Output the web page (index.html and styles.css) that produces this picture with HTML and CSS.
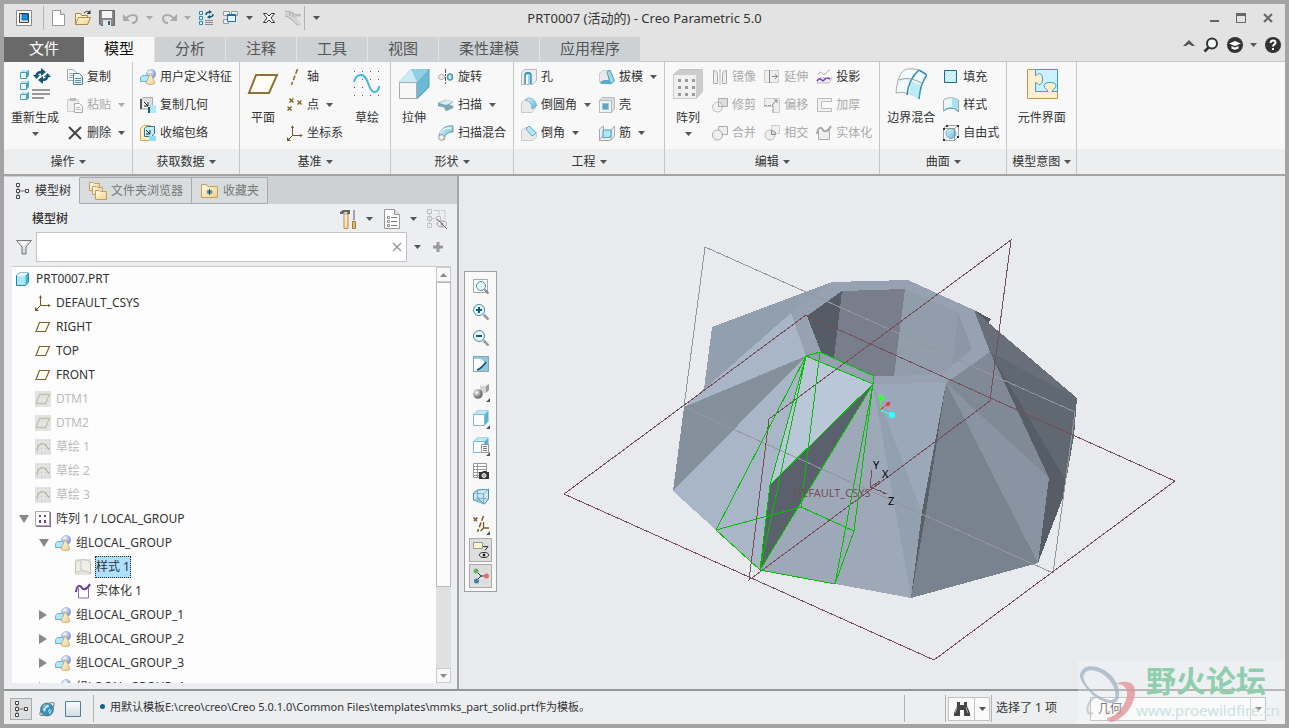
FILE: index.html
```html
<!DOCTYPE html>
<html lang="zh-CN">
<head>
<meta charset="UTF-8">
<meta name="viewport" content="width=device-width, initial-scale=1.0">
<title>PRT0007 (活动的) - Creo Parametric 5.0</title>
<link rel="stylesheet" href="styles.css">
</head>
<body>
    <!-- icon sprite -->
    <svg class="sprite" aria-hidden="true">
        <defs>
            <linearGradient id="g-blue" x1="0" y1="0" x2="1" y2="1"><stop offset="0" stop-color="#e4f8fd"/><stop offset="1" stop-color="#5fb4d4"/></linearGradient>
            <linearGradient id="g-gold" x1="0" y1="0" x2="1" y2="1"><stop offset="0" stop-color="#fffbe8"/><stop offset="1" stop-color="#f3cf86"/></linearGradient>
            <linearGradient id="g-grey" x1="0" y1="0" x2="1" y2="1"><stop offset="0" stop-color="#fdfdfd"/><stop offset="1" stop-color="#c4c4c4"/></linearGradient>
            <linearGradient id="g-pane" x1="0" y1="0" x2="0" y2="1"><stop offset="0" stop-color="#fdfefe"/><stop offset="1" stop-color="#cfdde3"/></linearGradient>
            <radialGradient id="g-ball" cx=".4" cy=".35"><stop offset="0" stop-color="#fff"/><stop offset="1" stop-color="#8da0dc"/></radialGradient>
            <radialGradient id="g-dark" cx=".35" cy=".35"><stop offset="0" stop-color="#fff"/><stop offset="1" stop-color="#777"/></radialGradient>
        </defs>
        <symbol id="caret" viewBox="0 0 7 4"><path d="M0 0h7L3.500 4z" fill="currentColor"/></symbol>
        <symbol id="app" viewBox="0 0 16 16"><path d="M.5.5h15v15H.5z" fill="#fff" stroke="#888"/><path d="M3.500 3.500h9v9h-9z" fill="#ddd" stroke="#444"/><path d="M6 4h6v6H6z" fill="#0b98dc" stroke="#226" stroke-width=".5"/></symbol>
        <symbol id="new" viewBox="0 0 16 16"><path d="M1.500.5h8l4 4v11h-12z" fill="#fff" stroke="#999"/><path d="M9.500.5v4h4" fill="#d9edf6" stroke="#999"/></symbol>
        <symbol id="open" viewBox="0 0 16 16"><path d="M.5 14.500v-11h5l1 2h6v3" fill="#fff1cc" stroke="#b0893c"/><path d="M.5 14.500l3-7h12l-3 7z" fill="url(#g-gold)" stroke="#b0893c"/><path d="M9 3c2-2 3-2 5-1" fill="none" stroke="#333"/><path d="M15.500 0v4h-4z" fill="#333"/></symbol>
        <symbol id="save" viewBox="0 0 16 16"><path d="M.5.500h15v15H2l-1.500-1.500z" fill="#878787" stroke="#666"/><path d="M3 1h10v7H3z" fill="#f4f4f4"/><path d="M4 10h8v6H4z" fill="#d5eaf3"/><path d="M9 11h2v4H9z" fill="#555"/></symbol>
        <symbol id="undo" viewBox="0 0 16 16"><path d="M3 9c3-5 11-5 11-1 0 3-2 5-5 5" fill="none" stroke="#aaa" stroke-width="2"/><path d="M0 4v7h7z" fill="#aaa"/></symbol>
        <symbol id="redo" viewBox="0 0 16 16"><path d="M13 9C10 4 2 4 2 8c0 3 2 5 5 5" fill="none" stroke="#aaa" stroke-width="2"/><path d="M16 4v7H9z" fill="#aaa"/></symbol>
        <symbol id="regen" viewBox="0 0 16 16"><path d="M.5 1.500h3v3h-3zM.5 6.500h3v3h-3zM.5 11.500h3v3h-3z" fill="#dff6fc" stroke="#2f87a8"/><path d="M6 10.500h8M6 12.500h8M6 14.500h8" stroke="#888"/><path d="M7 5c0-2 1-3 4-3M14 4c0 2-1 3-4 3" fill="none" stroke="#14577a" stroke-width="1.500"/><path d="M10 0l3 2-3 2zM11 5L8 7l3 2z" fill="#14577a"/></symbol>
        <symbol id="wins" viewBox="0 0 16 16"><path d="M.5 1.500h6v4h-6zM8.500 1.500h6v4h-6zM.5 9.500h5v4h-5z" fill="#eee" stroke="#999"/><path d="M4.500 4.500h8v7h-8z" fill="#e4f6fb" stroke="#1d7190"/><path d="M4 4h9v2H4z" fill="#1d7190"/></symbol>
        <symbol id="closewin" viewBox="0 0 16 16"><path d="M2.500 3.500h3L8 6l2.500-2.500h3L10 8l3.500 4.500h-3L8 10l-2.500 2.500h-3L6 8z" fill="#fff" stroke="#333"/></symbol>
        <symbol id="curve-a" viewBox="0 0 16 16"><path d="M0 1h7c3 5 5 8 9 13v2h-3C8 13 7 8 0 6z" fill="#d4d4d4"/><path d="M0 1c8 1 10 5 16 4M0 6c6 1 8 6 13 9" fill="none" stroke="#aaa"/><path d="M5 2v4M8 3v4M11 4v4M14 4v3" stroke="#aaa"/></symbol>
        <symbol id="min" viewBox="0 0 12 12"><path d="M2 8h9v2H2z" fill="#666"/></symbol>
        <symbol id="max" viewBox="0 0 12 12"><path d="M1.500 2.500h9v8h-9z" fill="none" stroke="#666"/><path d="M1 1h10v3H1z" fill="#666"/></symbol>
        <symbol id="close" viewBox="0 0 12 12"><path d="M2 2l8 8M10 2l-8 8" stroke="#666" stroke-width="2"/></symbol>
        <symbol id="up" viewBox="0 0 12 16"><path d="M0 9l6-6 6 6H9L6 7 3 9z" fill="#555"/></symbol>
        <symbol id="search" viewBox="0 0 16 16"><circle cx="9" cy="6.500" r="5" fill="#f4fafc" stroke="#333" stroke-width="2"/><path d="M1.500 14.500l4-4" stroke="#333" stroke-width="2.500"/></symbol>
        <symbol id="learn" viewBox="0 0 16 16"><circle cx="8" cy="8" r="8" fill="#333"/><path d="M2 6.500L8 4l6 2.500L8 9z" fill="#fff"/><path d="M4.500 9v2.500c2 1.500 5 1.500 7 0V9L8 10.500z" fill="#fff"/></symbol>
        <symbol id="help" viewBox="0 0 16 16"><circle cx="8" cy="8" r="8" fill="#333"/><path d="M5.500 6c0-3.500 5-3.300 5-.5 0 2-2.500 2-2.500 4" fill="none" stroke="#fff" stroke-width="2"/><path d="M7 11h2v2H7z" fill="#fff"/></symbol>

        <symbol id="regen-l" viewBox="0 0 32 32"><path d="M2 4l2-2h6v6l-2 2H2zM2 15l2-2h6v6l-2 2H2zM2 26l2-2h6v6l-2 2H2z" fill="#45a5c6"/><path d="M3 3l1.500-1h5L8 4H2zM3 14l1.500-1h5L8 15H2zM3 25l1.500-1h5L8 26H2z" fill="#b6e9f6"/><path d="M1.500 4.500h6v6h-6zM1.500 15.500h6v6h-6zM1.500 26.500h6v5h-6z" fill="#e9fafe" stroke="#4c9ab6"/><path d="M13 22h18M13 26h18M13 30h12" stroke="#999" stroke-width="2"/><path d="M17.500 8c0-3 2-4 6-4M28.500 8c0 3-2 4-6 4" fill="none" stroke="#14577a" stroke-width="2.500"/><path d="M22 0l5 4-5 4zM24 8l-5 4 5 4zM14 7h7l-3.500 4zM25 9h7l-3.500-4z" fill="#14577a"/></symbol>
        <symbol id="copy" viewBox="0 0 16 16"><path d="M.5.500h6l3 3v8h-9z" fill="#f8f8f8" stroke="#aaa"/><path d="M2 4.500h4M2 6.500h5M2 8.500h5" stroke="#aaa"/><path d="M6.500 4.500h6l3 3v8h-9z" fill="#e5f6fb" stroke="#4a7f93"/><path d="M8 9.500h6M8 11.500h6M8 13.500h6" stroke="#5e8fa3"/></symbol>
        <symbol id="paste" viewBox="0 0 16 16"><path d="M.5 2.500h11v12H.5z" fill="#eee" stroke="#ccc"/><path d="M3 1h6v3H3z" fill="#bbb"/><path d="M7.500 6.500h5l3 3v6h-8z" fill="#f8f8f8" stroke="#aaa"/><path d="M9 10.500h4M9 12.500h5" stroke="#bbb"/></symbol>
        <symbol id="delete" viewBox="0 0 16 16"><path d="M2 2l12 12M14 2L2 14" stroke="#444" stroke-width="2"/></symbol>
        <symbol id="udf" viewBox="0 0 16 16"><circle cx="11" cy="5" r="5" fill="url(#g-ball)"/><path d="M.5 8.500l2-2h6v6h-8z" fill="#aee8fa" stroke="#6db4cc"/><path d="M10.500 4L6 14c2 2 7 2 9 0z" fill="url(#g-gold)" stroke="#b59a5e" stroke-width=".7"/></symbol>
        <symbol id="copygeom" viewBox="0 0 16 16"><path d="M.5 3l3-2.500h9V9L10 12H.5z" fill="#ddd" stroke="#aaa"/><path d="M2 4h7v7H2z" fill="#eee"/><path d="M1 2v10" stroke="#555" stroke-width="2"/><path d="M4 5l4 4M8 5v4H4" stroke="#222" fill="none"/><path d="M10 8h6v8h-6z" fill="#ade9fa"/><path d="M9 10v6" stroke="#1a5a76" stroke-width="2"/></symbol>
        <symbol id="shrink" viewBox="0 0 16 16"><path d="M.5 3.500l3-3h7v15H.5z" fill="#ffedc5" stroke="#d3ac60"/><path d="M4.500 3.500l2-2h8v7l-3 3h-7z" fill="#c0eefa" stroke="#2c7891"/><path d="M6 5l4 4M10 5v4H6" stroke="#222" fill="none"/><path d="M9 11h7v5H9z" fill="#94dcf3"/></symbol>
        <symbol id="plane-l" viewBox="0 0 32 32"><path d="M9 7h21l-8 18H2z" fill="#fffdf5" stroke="#927037" stroke-width="2"/></symbol>
        <symbol id="axis" viewBox="0 0 16 16"><path d="M10.500 0l-6 16" stroke="#8a6622" stroke-width="1.500" stroke-dasharray="5 2"/></symbol>
        <symbol id="points" viewBox="0 0 16 16"><path d="M2.500 1.500l4 4M6.500 1.500l-4 4M10.500 3.500l4 4M14.500 3.500l-4 4M.5 9.500l4 4M4.500 9.500l-4 4" stroke="#8a6622" stroke-width="1.500"/></symbol>
        <symbol id="csys" viewBox="0 0 16 16"><path d="M5.500 1v9.500H15M5.500 10.500L1 15" fill="none" stroke="#76591f"/><path d="M4 3L5.500 0 7 3zM13 9l3 1.500-3 1.500zM0 12v4h4z" fill="#76591f"/></symbol>
        <symbol id="sketch-l" viewBox="0 0 32 32"><path d="M3.500 3v26M11.500 3v26M19.500 3v26M27.500 3v26" stroke="#555" stroke-dasharray="1 7"/><path d="M3 14c1-4 3-7 7-7 8 0 7 17 13 17 3 0 5-2 5-6" fill="none" stroke="#46b6e2" stroke-width="2"/></symbol>
        <symbol id="extrude-l" viewBox="0 0 32 32"><path d="M1 14L13 1h18v18L19 31z" fill="#6cb9d5"/><path d="M1 14L13 1h18L19 14z" fill="#8fcfe4"/><path d="M1 14L13 1l6 13z" fill="#c9ecf5"/><path d="M31 1v18L19 31" fill="none" stroke="#5a9fb8"/><path d="M1.500 14.500h17v16h-17z" fill="#f6f6f6" stroke="#aaa"/></symbol>
        <symbol id="revolve" viewBox="0 0 16 16"><ellipse cx="3.500" cy="8" rx="3" ry="2.500" fill="#eee" stroke="#aaa"/><ellipse cx="12" cy="8" rx="2.500" ry="3" fill="#bfeaf7" stroke="#4a9ab7" stroke-width="1.500"/><path d="M7.500 0v16" stroke="#555" stroke-dasharray="4 1 2 1"/></symbol>
        <symbol id="sweep" viewBox="0 0 16 16"><path d="M0 6l8-3 7 2-4 3 4 1v2l-7 3-2-4-6-1z" fill="#78a9bb" stroke="#8aa0a9" stroke-width=".5"/><path d="M1 6l8-3 6 2-7 3z" fill="#dcebf0"/></symbol>
        <symbol id="blend" viewBox="0 0 16 16"><path d="M1 11C2 4 8 0 15 1v6c-6 0-8 3-9 8z" fill="url(#g-blue)" stroke="#3f819a" stroke-width=".7"/><path d="M2 8c2-4 5-5 12-5" fill="none" stroke="#fff"/><circle cx="3.500" cy="12.500" r="2.800" fill="#f5f5f5" stroke="#999"/></symbol>
        <symbol id="hole" viewBox="0 0 16 16"><path d="M.5 3.500l3-3h12v11l-4 4H.5z" fill="#ececec" stroke="#bbb"/><path d="M4 15V6c0-3 6-3 6 0v9" fill="#9bd6e8" stroke="#2b86a5" stroke-width="1.300"/><path d="M5 15V6h2v9z" fill="#fff"/></symbol>
        <symbol id="round" viewBox="0 0 16 16"><path d="M.5 5.500l4-3c6 1 9 5 10 9l-3.500 4H.5z" fill="#eaeaea" stroke="#ccc"/><path d="M4 3L7 1c5 0 8 3 8.500 8L11 12C11 7 9 4 4 3z" fill="url(#g-blue)" stroke="#4c9fbd" stroke-width=".7"/></symbol>
        <symbol id="chamfer" viewBox="0 0 16 16"><path d="M.5 5.500l4-3h3l8 7v3l-4 3H.5z" fill="#eaeaea" stroke="#ccc"/><path d="M5 4l3-3 7.500 7L11 11z" fill="#b5e9f7" stroke="#3c9abb" stroke-width=".8"/></symbol>
        <symbol id="draft" viewBox="0 0 16 16"><path d="M.5 4.500l4-3h5v12H.5z" fill="#e9e9e9" stroke="#ccc"/><path d="M8 3l3-2 4.500 11-4 3z" fill="#9fdaea" stroke="#3188a9" stroke-width=".8"/><path d="M1 13l4-2h6l1 4H2z" fill="#58aeca"/></symbol>
        <symbol id="shell" viewBox="0 0 16 16"><path d="M.5 3.500l3-3h12v11l-3 4H.5z" fill="#ddd" stroke="#bbb"/><path d="M.5 3.500h12v12H.5z" fill="#f2f2f2" stroke="#bbb"/><path d="M3.500 6.500h6v6h-6z" fill="#5aa9c6" stroke="#8fc6da"/></symbol>
        <symbol id="rib" viewBox="0 0 16 16"><path d="M.5 4l4-3v9l-4 5zM12 5l3.500-4v10L12 15z" fill="#eee" stroke="#aaa"/><path d="M4 5h8v7l-8 1z" fill="#ade8f8" stroke="#4d9db8"/><path d="M.5 15.500h12" stroke="#555" stroke-dasharray="1 1"/></symbol>
        <symbol id="pattern-l" viewBox="0 0 32 32"><path d="M1.500 6.500l6-5h23v22l-6 7h-23z" fill="#ccc" stroke="#c5c5c5"/><path d="M1.500 6.500h23v24h-23z" fill="#f0f0f0" stroke="#ccc"/><path d="M6 11h3v3H6zM13 11h3v3h-3zM20 11h3v3h-3zM6 18h3v3H6zM13 18h3v3h-3zM20 18h3v3h-3zM6 25h3v3H6zM13 25h3v3h-3zM20 25h3v3h-3z" fill="#999"/></symbol>
        <symbol id="mirror" viewBox="0 0 16 16"><path d="M1.500 1.500c3 0 4 2 4 5v8h-4zM14.500 1.500c-3 0-4 2-4 5v8h4z" fill="#eee" stroke="#aaa"/><path d="M8 0v16" stroke="#bbb"/></symbol>
        <symbol id="trim" viewBox="0 0 16 16"><path d="M6.500 1.500h9v8h-9z" fill="#ddd" stroke="#aaa"/><circle cx="5.500" cy="10" r="5" fill="#eee" fill-opacity=".8" stroke="#bbb"/><path d="M6.500 5v4.500h4" fill="none" stroke="#aaa"/></symbol>
        <symbol id="merge" viewBox="0 0 16 16"><path d="M6.500 1.500h9v8h-9z" fill="#eee" stroke="#aaa"/><circle cx="5.500" cy="10" r="5" fill="#eee" stroke="#aaa"/></symbol>
        <symbol id="extend" viewBox="0 0 16 16"><path d="M.5 1.500h14v12H.5z" fill="#eee" stroke="#ccc"/><path d="M5.500 1v13M8 7.500h5M11 5l2.500 2.500L11 10" fill="none" stroke="#888"/></symbol>
        <symbol id="offset" viewBox="0 0 16 16"><path d="M.5 1.500h15v14H9v-6H.5z" fill="#eee" stroke="#ccc"/><path d="M0 8.500h9V16" fill="none" stroke="#999" stroke-dasharray="3 1"/><path d="M8 8l5-5M10 3h3v3" fill="none" stroke="#888"/></symbol>
        <symbol id="isect" viewBox="0 0 16 16"><path d="M7.500.5h8v8h-8z" fill="#f0f0f0" stroke="#ccc"/><circle cx="6" cy="10" r="5" fill="#eee" stroke="#bbb"/><path d="M7.500 5.500c3 0 4 2 4 4h-4z" fill="#ddd" stroke="#888"/></symbol>
        <symbol id="project" viewBox="0 0 16 16"><path d="M2 5c4-5 4 2 7 0s3-4 5-4" fill="none" stroke="#aaa"/><path d="M1 14l3-5h12l-3 5z" fill="#f3f3f3" stroke="#bbb"/><path d="M1 12c3-6 5 2 7-1s4-2 6-1" fill="none" stroke="#7a3fb8" stroke-width="1.500"/></symbol>
        <symbol id="thicken" viewBox="0 0 16 16"><path d="M15.500 1.500H1.500v13h14v-3h-10v-7h10z" fill="#f2f2f2" stroke="#bbb"/></symbol>
        <symbol id="solidify" viewBox="0 0 16 16"><path d="M2.500 6v8.500h11V5" fill="#eee" stroke="#aaa"/><path d="M1 9C2 0 6 3 7 5s5 2 8-4" fill="none" stroke="#aaa" stroke-width="2"/></symbol>
        <symbol id="boundary-l" viewBox="0 0 32 32"><path d="M1 25C2 12 5 3 12 1c8-1 14 1 20 6-4 5-7 13-8 24-6-5-14-8-23-6z" fill="#f1fafd" stroke="#aaa"/><path d="M16 13l11 5-3 13-10-5z" fill="#bdeaf7"/><path d="M24 2l8 5c-4 5-7 13-8 24" fill="none" stroke="#3c94b4" stroke-width="1.500"/><path d="M12 27c1-11 5-19 12-25" fill="none" stroke="#2e88aa" stroke-width="1.500"/><path d="M4 12c8-3 16-1 24 4" fill="none" stroke="#999"/></symbol>
        <symbol id="fill" viewBox="0 0 16 16"><path d="M1.500 1.500h12v12h-12z" fill="#bdeefa" stroke="#216b88"/><path d="M3 8l5-5M3 12l9-9M7 12l5-5" stroke="#fff"/></symbol>
        <symbol id="style" viewBox="0 0 16 16"><path d="M.5 3C5 0 11 0 15.500 3v12C12 10 5 10 .5 14z" fill="#e5f6fb" stroke="#aaa"/><path d="M9 1c3 0 5 1 6 2v11c-2-3-4-4-6-4z" fill="#a5e1f4"/><path d="M.5 14C5 10 12 10 15.500 15" fill="none" stroke="#3b9cbd"/></symbol>
        <symbol id="freestyle" viewBox="0 0 16 16"><circle cx="8" cy="8.500" r="5" fill="url(#g-blue)" stroke="#6db4cd"/><path d="M.5 3.500l3-3h12v11l-4 4H.5zM.5 3.500h11v12M11.500 3.500l4-3" fill="none" stroke="#888" stroke-width=".8"/><path d="M0 3h2v2H0zM3 0h2v2H3zM14 0h2v2h-2zM0 14h2v2H0zM14 11h2v2h-2z" fill="#333"/></symbol>
        <symbol id="intent-l" viewBox="0 0 32 32"><path d="M1.500 1.500h30v29h-30z" fill="#ffefcf" stroke="#bd9550"/><path d="M9.500 1.500h22v22H26c0-2 4-3 4-6 0-4-12-4-12 0 0 3 4 4 4 6H9.500v-9c2 0 2 2 4 2 4 0 4-11 0-11-2 0-2 2-4 2z" fill="#c9f1ff" stroke="#3f9dbf"/></symbol>

        <symbol id="tree" viewBox="0 0 16 16"><path d="M2.500.500h3v3h-3zM2.500 6.500h3v3h-3zM2.500 12.500h3v3h-3zM11.500 6.500h3v3h-3z" fill="#fff" stroke="#444"/><path d="M4 4v2M4 10v2M6 8h5" stroke="#777"/></symbol>
        <symbol id="folders" viewBox="0 0 20 20"><g fill="url(#g-gold)" stroke="#c0a062"><path d="M1.500 9.500v-8h4l1 1h5v7z"/><path d="M4.500 13.500v-8h4l1 1h5v7z"/><path d="M7.500 18.500v-9h4l1 1h6v8z"/></g></symbol>
        <symbol id="fav" viewBox="0 0 20 20"><path d="M1.500 16.500v-13h5l1 2h10v11z" fill="url(#g-gold)" stroke="#c0a062"/><path d="M9.500 8v6M6.500 11h6M7.500 9l4 4M11.500 9l-4 4" stroke="#125e7c"/></symbol>
        <symbol id="tools" viewBox="0 0 20 20"><path d="M1 3l3-2h7v4H8V3H6L4 5H1z" fill="#666"/><path d="M5 5h4v14.500H5z" fill="url(#g-gold)" stroke="#b58f4e"/><path d="M15 1v10" stroke="#888" stroke-width="1.500"/><path d="M13.500 12.500h3v7h-3z" fill="#e7b766" stroke="#a97b35"/></symbol>
        <symbol id="list" viewBox="0 0 20 20"><path d="M1.500.5h10l5 5v14h-15z" fill="#fff" stroke="#999"/><path d="M11.500.5v5h5" fill="#d7e7ee" stroke="#999"/><path d="M8 8.500h6M8 12.500h6M8 16.500h6" stroke="#777"/><path d="M4.500 7.500h2v2h-2zM4.500 11.500h2v2h-2zM4.500 15.500h2v2h-2z" fill="#fff" stroke="#777" stroke-width=".8"/></symbol>
        <symbol id="treehide" viewBox="0 0 20 20"><path d="M.5.5h4v4h-4zM.5 7.500h4v4h-4zM.5 14.500h4v4h-4zM9.500 7.500h4v4h-4z" fill="none" stroke="#c0c0c0"/><path d="M2.500 5v9M5 9.500h4M7 1.500h5v5M14 1.500h4v9" fill="none" stroke="#c8c8c8"/><ellipse cx="15" cy="15" rx="5" ry="3" fill="#eee" stroke="#999"/><circle cx="15" cy="15" r="1.500" fill="#999"/><path d="M10 10l10 10" stroke="#777"/></symbol>
        <symbol id="funnel" viewBox="0 0 16 16"><path d="M.5 1.500h15L10 8v7H6V8z" fill="url(#g-grey)" stroke="#777"/><path d="M4 3h7L8 7z" fill="#fff"/></symbol>
        <symbol id="plus" viewBox="0 0 12 12"><path d="M6 1v10M1 6h10" stroke="#999" stroke-width="3"/></symbol>
        <symbol id="x" viewBox="0 0 10 10"><path d="M1 1l8 8M9 1L1 9" stroke="#999" stroke-width="1.500"/></symbol>
        <symbol id="part" viewBox="0 0 16 16"><path d="M1.500 4.500l3-2.500h9v9l-3 3.500h-9z" fill="#4cb3dc" stroke="#2683a7"/><path d="M2 4l3-2h8l-3 3H2z" fill="#e6fafe"/><path d="M2 5h8.500v9H2z" fill="#a8e8fa"/></symbol>
        <symbol id="plane" viewBox="0 0 16 16"><path d="M4.500 3.500h10l-4 9H1z" fill="#fffdf5" stroke="#82632b" stroke-width="1.200"/></symbol>
        <symbol id="plane-off" viewBox="0 0 16 16"><path d="M0 0h16v16H0z" fill="#e3e3e3"/><path d="M4.500 3.500h10l-4 9H1z" fill="none" stroke="#c4c1ad" stroke-width="1.300"/></symbol>
        <symbol id="sketch-off" viewBox="0 0 16 16"><path d="M0 0h16v16H0z" fill="#e3e3e3"/><path d="M2.500 1v15M6.500 1v15M10.500 1v15M14.500 1v15" stroke="#c4c4c4" stroke-dasharray="1 3"/><path d="M2 12C3 3 10 2 14 11" fill="none" stroke="#bcb99e" stroke-width="1.500"/></symbol>
        <symbol id="pattern" viewBox="0 0 16 16"><path d="M1 1h15v15H1z" fill="#866aa5"/><path d="M.5.500h14v14H.5z" fill="#fff" stroke="#aaa"/><path d="M4 4h2v2H4zM9 4h2v2H9zM4 9h2v3H4zM9 9h2v3H9z" fill="#6a3f92"/></symbol>
        <symbol id="style-off" viewBox="0 0 16 16"><path d="M0 0h16v16H0z" fill="#e4e4e4"/><path d="M.5 3C4 0 12 0 15.500 3v12C12 11 5 11 .5 14zM6 1v10" fill="#eeeee8" stroke="#c4c3b4"/></symbol>
        <symbol id="solid" viewBox="0 0 16 16"><path d="M3.500 5v10h10V5" fill="#fff" stroke="#8b6ca8"/><path d="M1 9C2 0 6 3 7 5s5 2 8-4" fill="none" stroke="#6c3b9a" stroke-width="2"/></symbol>

        <symbol id="refit" viewBox="0 0 16 16"><path d="M.5 1.500h14v13H.5z" fill="#fff" stroke="#aaa"/><circle cx="8" cy="8" r="4.500" fill="#e6f9fd" stroke="#4b8ca6"/><path d="M11.500 11.500l4 4" stroke="#888" stroke-width="2"/></symbol>
        <symbol id="zoomin" viewBox="0 0 16 16"><circle cx="6" cy="6" r="5.500" fill="#e8fafe" stroke="#4b8ca6"/><path d="M6 3v6M3 6h6" stroke="#0e5c80" stroke-width="2"/><path d="M10.500 10.500l5 5" stroke="#999" stroke-width="2.500"/></symbol>
        <symbol id="zoomout" viewBox="0 0 16 16"><circle cx="6" cy="6" r="5.500" fill="#e8fafe" stroke="#4b8ca6"/><path d="M3 6h6" stroke="#0e5c80" stroke-width="2"/><path d="M10.500 10.500l5 5" stroke="#999" stroke-width="2.500"/></symbol>
        <symbol id="repaint" viewBox="0 0 16 16"><path d="M.5.500h15v15H.5z" fill="#8cc9df" stroke="#8aa2ab"/><path d="M1 3c4-1 10 0 11 4l-8 8H1z" fill="#fff"/><path d="M13 6c-2 3-4 6-9 8" fill="none" stroke="#174e68" stroke-width="1.500"/></symbol>
        <symbol id="shade" viewBox="0 0 16 16"><path d="M7 3l2-2h7v6l-3 3H7z" fill="#999"/><path d="M7 3l2-2h7l-3 2z" fill="#f2f2f2"/><path d="M7 3h6v7H7z" fill="#d5d5d5"/><circle cx="5" cy="11" r="4.800" fill="url(#g-dark)"/></symbol>
        <symbol id="orient" viewBox="0 0 16 16"><path d="M.5 4.500l4-4h11v11l-4 4H.5z" fill="#57b3d3"/><path d="M1 4l4-3h10l-3 3z" fill="#bfe9f4"/><path d="M.5 4.500h11v11H.5z" fill="#fff" stroke="#7dbcd2"/></symbol>
        <symbol id="views" viewBox="0 0 16 16"><path d="M.5 4.500l4-4h11v11l-4 4H.5z" fill="#57b3d3"/><path d="M1 4l4-3h10l-3 3z" fill="#bfe9f4"/><path d="M.5 4.500h11v11H.5z" fill="#fff" stroke="#7dbcd2"/><path d="M8.500 7.500h7v8h-7z" fill="#fff" stroke="#999"/><path d="M10 9.500h4M10 11.500h4M10 13.500h4" stroke="#777"/></symbol>
        <symbol id="viewmgr" viewBox="0 0 16 16"><path d="M.5.5h13v14H.5zM.5 3.500h13M.5 6.500h13M.5 9.500h13M.5 12.500h13M4.500.5v14" fill="#fff" stroke="#999"/><path d="M6 9h3l1-1h3l1 1h2v7H6z" fill="#333"/><circle cx="11" cy="12.500" r="2" fill="#aaa" stroke="#eee"/></symbol>
        <symbol id="persp" viewBox="0 0 16 16"><path d="M.5 4l4-3 11-1v10l-4 5-11-4z" fill="#cfe8f0" stroke="#4190ae"/><path d="M1 11l4-3 6 7z" fill="#8cc3d7"/><path d="M.5 4l10 1 5-5M10.500 5v10M4.500 1v8l6 5M4.500 9l10 1" fill="none" stroke="#5ba3bd" stroke-width=".8"/></symbol>
        <symbol id="datum" viewBox="0 0 16 16"><path d="M.5 1.500l4 4M4.500 1.500l-4 4M10.500 0l-6 16" stroke="#7c5b1c" stroke-width="1.500" stroke-dasharray="5 2"/><path d="M10.500 6v6H16M10.500 12l-3 3" fill="none" stroke="#7c5b1c" stroke-width="1.300"/></symbol>
        <symbol id="annot" viewBox="0 0 16 16"><path d="M.5.5h9v6h-9z" fill="#fff1ca" stroke="#999"/><path d="M10 4.500h5l-3 4" fill="none" stroke="#333"/><ellipse cx="11" cy="13" rx="4.500" ry="2.500" fill="#eee" stroke="#333"/><circle cx="11" cy="13" r="1.500" fill="#222"/></symbol>
        <symbol id="spin" viewBox="0 0 16 16"><path d="M3 3l5 5h5M8 8l-5 5" fill="none" stroke="#333"/><circle cx="3" cy="3" r="2.500" fill="#6cab62"/><circle cx="13.500" cy="8" r="2.500" fill="#dc736d"/><circle cx="3.500" cy="13" r="2.500" fill="#3a86ab"/></symbol>
        <symbol id="globe" viewBox="0 0 16 16"><circle cx="8" cy="8.500" r="6.500" fill="#2b98c4" stroke="#22607c" stroke-width=".6"/><path d="M5 4l4-1 1 3-3 1-1 4-3-3zM10 8l3 1-2 4-2-2z" fill="#c7effa"/><ellipse cx="8" cy="8" rx="9" ry="3.500" transform="rotate(-42 8 8)" fill="none" stroke="#777"/></symbol>
        <symbol id="pane" viewBox="0 0 16 16"><path d="M.5.5h15v15H.5z" fill="url(#g-pane)" stroke="#4f8297"/></symbol>
        <symbol id="binoc" viewBox="0 0 16 16"><path d="M3 1h3v3h4V1h3v4l3 7v3h-6V9H6v6H0v-3l3-7z" fill="#444"/><path d="M3 6l-2 6M12 6l2 6" stroke="#aaa"/></symbol>
    </svg>

    <header class="titlebar">
        <div class="quick-access">
            <button type="button" class="tool" aria-label="应用程序"><svg class="icon"><use href="#app"/></svg></button>
            <span class="sep"></span>
            <button type="button" class="tool" aria-label="新建"><svg class="icon"><use href="#new"/></svg></button>
            <button type="button" class="tool" aria-label="打开"><svg class="icon"><use href="#open"/></svg></button>
            <button type="button" class="tool" aria-label="保存"><svg class="icon"><use href="#save"/></svg></button>
            <button type="button" class="tool off" aria-label="撤消"><svg class="icon"><use href="#undo"/></svg><svg class="caret"><use href="#caret"/></svg></button>
            <button type="button" class="tool off" aria-label="重做"><svg class="icon"><use href="#redo"/></svg><svg class="caret"><use href="#caret"/></svg></button>
            <button type="button" class="tool" aria-label="重新生成"><svg class="icon"><use href="#regen"/></svg></button>
            <button type="button" class="tool" aria-label="窗口"><svg class="icon"><use href="#wins"/></svg><svg class="caret"><use href="#caret"/></svg></button>
            <button type="button" class="tool" aria-label="关闭窗口"><svg class="icon"><use href="#closewin"/></svg></button>
            <button type="button" class="tool off" aria-label="曲率"><svg class="icon"><use href="#curve-a"/></svg></button>
            <span class="sep tight"></span>
            <button type="button" class="tool more" aria-label="自定义"><svg class="caret"><use href="#caret"/></svg></button>
        </div>
        <h1 class="title">PRT0007 (活动的) - Creo Parametric 5.0</h1>
        <div class="window-controls">
            <button type="button" class="tool" aria-label="最小化"><svg class="icon-s"><use href="#min"/></svg></button>
            <button type="button" class="tool" aria-label="最大化"><svg class="icon-s"><use href="#max"/></svg></button>
            <button type="button" class="tool" aria-label="关闭"><svg class="icon-s"><use href="#close"/></svg></button>
        </div>
    </header>

    <nav class="tabs">
        <button type="button" class="tab file">文件</button>
        <button type="button" class="tab active">模型</button>
        <button type="button" class="tab">分析</button>
        <button type="button" class="tab">注释</button>
        <button type="button" class="tab">工具</button>
        <button type="button" class="tab">视图</button>
        <button type="button" class="tab">柔性建模</button>
        <button type="button" class="tab">应用程序</button>
        <div class="help-tools">
            <button type="button" class="tool" aria-label="最小化功能区"><svg class="icon-up"><use href="#up"/></svg></button>
            <button type="button" class="tool" aria-label="搜索"><svg class="icon"><use href="#search"/></svg></button>
            <button type="button" class="tool" aria-label="学习"><svg class="icon"><use href="#learn"/></svg><svg class="caret"><use href="#caret"/></svg></button>
            <button type="button" class="tool" aria-label="帮助"><svg class="icon"><use href="#help"/></svg></button>
        </div>
    </nav>

    <div class="ribbon">
        <section class="group">
            <div class="group-body">
                <button type="button" class="big"><svg class="icon-l"><use href="#regen-l"/></svg>重新生成<svg class="caret"><use href="#caret"/></svg></button>
                <div class="col">
                    <button type="button" class="cmd"><svg class="icon"><use href="#copy"/></svg>复制</button>
                    <button type="button" class="cmd off"><svg class="icon"><use href="#paste"/></svg>粘贴<svg class="caret"><use href="#caret"/></svg></button>
                    <button type="button" class="cmd"><svg class="icon"><use href="#delete"/></svg>删除<svg class="caret"><use href="#caret"/></svg></button>
                </div>
            </div>
            <button type="button" class="group-label">操作<svg class="caret"><use href="#caret"/></svg></button>
        </section>
        <section class="group">
            <div class="group-body">
                <div class="col">
                    <button type="button" class="cmd"><svg class="icon"><use href="#udf"/></svg>用户定义特征</button>
                    <button type="button" class="cmd"><svg class="icon"><use href="#copygeom"/></svg>复制几何</button>
                    <button type="button" class="cmd"><svg class="icon"><use href="#shrink"/></svg>收缩包络</button>
                </div>
            </div>
            <button type="button" class="group-label">获取数据<svg class="caret"><use href="#caret"/></svg></button>
        </section>
        <section class="group">
            <div class="group-body">
                <button type="button" class="big"><svg class="icon-l"><use href="#plane-l"/></svg>平面</button>
                <div class="col">
                    <button type="button" class="cmd"><svg class="icon"><use href="#axis"/></svg>轴</button>
                    <button type="button" class="cmd"><svg class="icon"><use href="#points"/></svg>点<svg class="caret"><use href="#caret"/></svg></button>
                    <button type="button" class="cmd"><svg class="icon"><use href="#csys"/></svg>坐标系</button>
                </div>
                <button type="button" class="big"><svg class="icon-l"><use href="#sketch-l"/></svg>草绘</button>
            </div>
            <button type="button" class="group-label">基准<svg class="caret"><use href="#caret"/></svg></button>
        </section>
        <section class="group">
            <div class="group-body">
                <button type="button" class="big"><svg class="icon-l"><use href="#extrude-l"/></svg>拉伸</button>
                <div class="col">
                    <button type="button" class="cmd"><svg class="icon"><use href="#revolve"/></svg>旋转</button>
                    <button type="button" class="cmd"><svg class="icon"><use href="#sweep"/></svg>扫描<svg class="caret"><use href="#caret"/></svg></button>
                    <button type="button" class="cmd"><svg class="icon"><use href="#blend"/></svg>扫描混合</button>
                </div>
            </div>
            <button type="button" class="group-label">形状<svg class="caret"><use href="#caret"/></svg></button>
        </section>
        <section class="group">
            <div class="group-body">
                <div class="col">
                    <button type="button" class="cmd"><svg class="icon"><use href="#hole"/></svg>孔</button>
                    <button type="button" class="cmd"><svg class="icon"><use href="#round"/></svg>倒圆角<svg class="caret"><use href="#caret"/></svg></button>
                    <button type="button" class="cmd"><svg class="icon"><use href="#chamfer"/></svg>倒角<svg class="caret"><use href="#caret"/></svg></button>
                </div>
                <div class="col">
                    <button type="button" class="cmd"><svg class="icon"><use href="#draft"/></svg>拔模<svg class="caret"><use href="#caret"/></svg></button>
                    <button type="button" class="cmd"><svg class="icon"><use href="#shell"/></svg>壳</button>
                    <button type="button" class="cmd"><svg class="icon"><use href="#rib"/></svg>筋<svg class="caret"><use href="#caret"/></svg></button>
                </div>
            </div>
            <button type="button" class="group-label">工程<svg class="caret"><use href="#caret"/></svg></button>
        </section>
        <section class="group">
            <div class="group-body">
                <button type="button" class="big"><svg class="icon-l"><use href="#pattern-l"/></svg>阵列<svg class="caret"><use href="#caret"/></svg></button>
                <div class="col">
                    <button type="button" class="cmd off"><svg class="icon"><use href="#mirror"/></svg>镜像</button>
                    <button type="button" class="cmd off"><svg class="icon"><use href="#trim"/></svg>修剪</button>
                    <button type="button" class="cmd off"><svg class="icon"><use href="#merge"/></svg>合并</button>
                </div>
                <div class="col">
                    <button type="button" class="cmd off"><svg class="icon"><use href="#extend"/></svg>延伸</button>
                    <button type="button" class="cmd off"><svg class="icon"><use href="#offset"/></svg>偏移</button>
                    <button type="button" class="cmd off"><svg class="icon"><use href="#isect"/></svg>相交</button>
                </div>
                <div class="col">
                    <button type="button" class="cmd"><svg class="icon"><use href="#project"/></svg>投影</button>
                    <button type="button" class="cmd off"><svg class="icon"><use href="#thicken"/></svg>加厚</button>
                    <button type="button" class="cmd off"><svg class="icon"><use href="#solidify"/></svg>实体化</button>
                </div>
            </div>
            <button type="button" class="group-label">编辑<svg class="caret"><use href="#caret"/></svg></button>
        </section>
        <section class="group">
            <div class="group-body">
                <button type="button" class="big"><svg class="icon-l"><use href="#boundary-l"/></svg>边界混合</button>
                <div class="col">
                    <button type="button" class="cmd"><svg class="icon"><use href="#fill"/></svg>填充</button>
                    <button type="button" class="cmd"><svg class="icon"><use href="#style"/></svg>样式</button>
                    <button type="button" class="cmd"><svg class="icon"><use href="#freestyle"/></svg>自由式</button>
                </div>
            </div>
            <button type="button" class="group-label">曲面<svg class="caret"><use href="#caret"/></svg></button>
        </section>
        <section class="group">
            <div class="group-body">
                <button type="button" class="big"><svg class="icon-l"><use href="#intent-l"/></svg>元件界面</button>
            </div>
            <button type="button" class="group-label">模型意图<svg class="caret"><use href="#caret"/></svg></button>
        </section>
        <div class="group rest"><div class="group-body"></div><div class="group-label"></div></div>
    </div>

    <main class="workspace">
        <aside class="navigator">
            <div class="nav-tabs">
                <button type="button" class="nav-tab active"><svg class="icon"><use href="#tree"/></svg>模型树</button>
                <button type="button" class="nav-tab"><svg class="icon-m"><use href="#folders"/></svg>文件夹浏览器</button>
                <button type="button" class="nav-tab"><svg class="icon-m"><use href="#fav"/></svg>收藏夹</button>
            </div>
            <div class="nav-head">
                <h2>模型树</h2>
                <button type="button" class="tool" aria-label="设置"><svg class="icon-m"><use href="#tools"/></svg><svg class="caret"><use href="#caret"/></svg></button>
                <button type="button" class="tool" aria-label="显示"><svg class="icon-m"><use href="#list"/></svg><svg class="caret"><use href="#caret"/></svg></button>
                <button type="button" class="tool" aria-label="隐藏"><svg class="icon-m"><use href="#treehide"/></svg></button>
            </div>
            <div class="filter">
                <label for="filter" aria-label="过滤"><svg class="icon"><use href="#funnel"/></svg></label>
                <div class="filter-box">
                    <input type="text" id="filter">
                    <button type="button" class="tool" aria-label="清除"><svg class="icon-x"><use href="#x"/></svg></button>
                </div>
                <button type="button" class="tool" aria-label="历史"><svg class="caret"><use href="#caret"/></svg></button>
                <button type="button" class="tool" aria-label="添加"><svg class="icon-s"><use href="#plus"/></svg></button>
            </div>
            <div class="tree-box">
                <ul class="tree">
                    <li class="row root"><svg class="icon"><use href="#part"/></svg><span>PRT0007.PRT</span></li>
                    <li class="row"><i class="twist"></i><svg class="icon"><use href="#csys"/></svg><span>DEFAULT_CSYS</span></li>
                    <li class="row"><i class="twist"></i><svg class="icon"><use href="#plane"/></svg><span>RIGHT</span></li>
                    <li class="row"><i class="twist"></i><svg class="icon"><use href="#plane"/></svg><span>TOP</span></li>
                    <li class="row"><i class="twist"></i><svg class="icon"><use href="#plane"/></svg><span>FRONT</span></li>
                    <li class="row off"><i class="twist"></i><svg class="icon"><use href="#plane-off"/></svg><span>DTM1</span></li>
                    <li class="row off"><i class="twist"></i><svg class="icon"><use href="#plane-off"/></svg><span>DTM2</span></li>
                    <li class="row off"><i class="twist"></i><svg class="icon"><use href="#sketch-off"/></svg><span>草绘 1</span></li>
                    <li class="row off"><i class="twist"></i><svg class="icon"><use href="#sketch-off"/></svg><span>草绘 2</span></li>
                    <li class="row off"><i class="twist"></i><svg class="icon"><use href="#sketch-off"/></svg><span>草绘 3</span></li>
                    <li class="row"><i class="twist open"></i><svg class="icon"><use href="#pattern"/></svg><span>阵列 1 / LOCAL_GROUP</span></li>
                    <li class="row lv2"><i class="twist open"></i><svg class="icon"><use href="#udf"/></svg><span>组LOCAL_GROUP</span></li>
                    <li class="row lv3"><i class="twist"></i><svg class="icon"><use href="#style-off"/></svg><span class="selected">样式 1</span></li>
                    <li class="row lv3"><i class="twist"></i><svg class="icon"><use href="#solid"/></svg><span>实体化 1</span></li>
                    <li class="row lv2"><i class="twist closed"></i><svg class="icon"><use href="#udf"/></svg><span>组LOCAL_GROUP_1</span></li>
                    <li class="row lv2"><i class="twist closed"></i><svg class="icon"><use href="#udf"/></svg><span>组LOCAL_GROUP_2</span></li>
                    <li class="row lv2"><i class="twist closed"></i><svg class="icon"><use href="#udf"/></svg><span>组LOCAL_GROUP_3</span></li>
                    <li class="row lv2"><i class="twist closed"></i><svg class="icon"><use href="#udf"/></svg><span>组LOCAL_GROUP_4</span></li>
                </ul>
                <div class="scrollbar">
                    <button type="button" class="scroll-btn" aria-label="向上"><svg class="caret flip"><use href="#caret"/></svg></button>
                    <div class="track"><div class="thumb"></div></div>
                    <button type="button" class="scroll-btn" aria-label="向下"><svg class="caret"><use href="#caret"/></svg></button>
                </div>
            </div>
        </aside>

        <section class="viewport">
            <svg class="scene" viewBox="459 176 826 513" shape-rendering="crispEdges">
                <!-- shaded faces, back to front -->
                <path fill="#919fae" d="M712 327L832 282 842 291 791 340 684 407 704 389z"/>
                <path fill="#96a2b2" d="M832 282L908 280 974 310 990 352 946 383 873 384 806 356 791 313z"/>
                <path fill="#525963" d="M974 310L991 319 988 324z"/>
                <path fill="#686f7b" d="M974 310L990 324 1077 398 990 352z"/>
                <path fill="#606872" d="M990 352L1077 398 1074 436 1066 481z"/>
                <path fill="#565d67" d="M990 352L1066 481 1064 495 1038 563 1049 478z"/>
                <path fill="#565c66" d="M842 291L807 316 821 352 834 358z"/>
                <path fill="#787e8b" d="M842 291L905 289 894 376 874 376 834 358z"/>
                <path fill="#919dab" d="M905 289L958 312 972 349 942 374 894 376z"/>
                <path fill="#8b97a6" d="M958 312L972 349 953 364z"/>
                <path fill="#a9b6c7" d="M684 407L791 313 806 356z"/>
                <path fill="#84919d" d="M684 407L806 356 673 491z"/>
                <path fill="#a9b6c7" d="M673 491L806 356 873 384 760 570 716 530z"/>
                <path fill="#bac7d9" d="M806 356L873 384 770 485z"/>
                <path fill="#59606a" d="M946 383L920 512 911 598 942 450z"/>
                <path fill="#9da9b9" d="M873 384L760 570 911 598z"/>
                <path fill="#9ba8b9" d="M873 384L946 383 922 512z"/>
                <path fill="#93a0b0" d="M873 384L922 512 911 598z"/>
                <path fill="#5b616c" d="M873 384L770 485 760 570z"/>
                <path fill="#7f8a96" d="M946 383L990 352 1049 478z"/>
                <path fill="#8894a2" d="M946 383L1049 478 1038 563z"/>
                <path fill="#78838f" d="M946 383L1038 563 911 598 926 512z"/>
                <!-- datum planes -->
                <path fill="none" stroke="#9595a0" d="M705 247L684 407 1053 573 1075 412z"/>
                <g fill="none" stroke="#764f56">
                    <path d="M564 494L806 315 1175 481 934 660z"/>
                    <path d="M1011 240L990 401 749 580 769 419z"/>
                </g>
                <!-- selected pattern member -->
                <g fill="none" stroke="#00c000">
                    <path d="M806 356L820 352 874 376 873 384z"/>
                    <path d="M806 356L716 530 760 570 835 584 854 531 801 507 716 530"/>
                    <path d="M770 485L806 356 760 570M820 352L801 507M874 376L854 531M873 384L835 584"/>
                    <path d="M770 485L873 384 760 570z"/>
                </g>
                <!-- spin centre -->
                <path fill="none" stroke="#40ff40" d="M880 410V397"/>
                <path fill="none" stroke="#f03838" d="M880 410l8-6"/>
                <path fill="none" stroke="#30ffff" d="M880 410l12 5"/>
                <circle cx="881" cy="398" r="3" fill="#38ff38"/>
                <circle cx="888" cy="404" r="2" fill="#f03838"/>
                <circle cx="892" cy="415" r="3" fill="#30ffff"/>
                <!-- coordinate system -->
                <path fill="none" stroke="#764f56" d="M870 487L872 470M870 487l10-6M870 487l17 7M875 485l4-1M880 490l4 4"/>
                <text class="csys-name" x="794" y="497">DEFAULT_CSYS</text>
                <text class="axis-name" x="873" y="469">Y</text>
                <text class="axis-name" x="882" y="478">X</text>
                <text class="axis-name" x="888" y="505">Z</text>
            </svg>

            <div class="view-tools">
                <button type="button" aria-label="重新调整"><svg class="icon"><use href="#refit"/></svg></button>
                <button type="button" aria-label="放大"><svg class="icon"><use href="#zoomin"/></svg></button>
                <button type="button" aria-label="缩小"><svg class="icon"><use href="#zoomout"/></svg></button>
                <button type="button" aria-label="重画"><svg class="icon"><use href="#repaint"/></svg></button>
                <button type="button" class="has-menu" aria-label="显示样式"><svg class="icon"><use href="#shade"/></svg></button>
                <button type="button" class="has-menu" aria-label="已保存方向"><svg class="icon"><use href="#orient"/></svg></button>
                <button type="button" class="has-menu" aria-label="视图列表"><svg class="icon"><use href="#views"/></svg></button>
                <button type="button" aria-label="视图管理器"><svg class="icon"><use href="#viewmgr"/></svg></button>
                <button type="button" aria-label="透视图"><svg class="icon"><use href="#persp"/></svg></button>
                <button type="button" class="has-menu" aria-label="基准显示"><svg class="icon"><use href="#datum"/></svg></button>
                <button type="button" class="pressed" aria-label="注释显示"><svg class="icon"><use href="#annot"/></svg></button>
                <button type="button" class="pressed" aria-label="旋转中心"><svg class="icon"><use href="#spin"/></svg></button>
            </div>
        </section>
    </main>

    <footer class="statusbar">
        <button type="button" class="status-btn pressed" aria-label="模型树"><svg class="icon"><use href="#tree"/></svg></button>
        <button type="button" class="status-btn" aria-label="浏览器"><svg class="icon"><use href="#globe"/></svg></button>
        <button type="button" class="status-btn" aria-label="全屏"><svg class="icon"><use href="#pane"/></svg></button>
        <span class="sep"></span>
        <p class="message">用默认模板E:\creo\creo\Creo 5.0.1.0\Common Files\templates\mmks_part_solid.prt作为模板。</p>
        <span class="sep"></span>
        <span class="status-gap"></span>
        <span class="sep"></span>
        <button type="button" class="find" aria-label="查找"><svg class="icon"><use href="#binoc"/></svg><span class="drop"><svg class="caret"><use href="#caret"/></svg></span></button>
        <span class="sep"></span>
        <span class="count">选择了 1 项</span>
        <div class="select-wrap">
            <select aria-label="选择过滤器"><option>几何</option></select>
            <span class="drop"><svg class="caret"><use href="#caret"/></svg></span>
        </div>
    </footer>

    <div class="watermark">
        <svg class="rings" viewBox="0 0 60 60" opacity=".75"><path fill="#9fb2c4" fill-rule="evenodd" d="M3 9C8-2 30 4 38 19c4 8 4 16 1 19-6 6-20-1-28-10C4 20 0 14 3 9zm3 2c-2 5 2 11 8 17 8 7 18 11 22 8 3-3 1-10-2-15C27 8 10 3 6 11z"/><path fill="#e28f93" d="M38 21c10-5 20-2 19 9-1 14-12 26-23 29-3 0-5-2-5-4 8-1 18-11 20-22 1-9-4-12-11-12z"/><path d="M19 33c-11 5-13 21-4 17" fill="none" stroke="#b9c3cc" stroke-width="2"/></svg>
        <div class="mark-text">
            <strong>野火论坛</strong>
            <span>www.proewildfire.cn</span>
        </div>
    </div>
</body>
</html>
```
FILE: styles.css
```css
* {
    box-sizing: border-box;
}

body {
    margin: 0;
    padding: 4px;
    height: 100vh;
    display: flex;
    flex-direction: column;
    overflow: hidden;
    background: #a3a3a3;
    font-family: "Noto Sans", "Noto Sans CJK SC", sans-serif;
    font-size: 12px;
    line-height: 16px;
    color: #333;
}

button, input, select {
    font: inherit;
    color: inherit;
    margin: 0;
    padding: 0;
    border: none;
    background: none;
}

svg {
    display: block;
    flex: none;
}

.sprite {
    position: absolute;
    width: 0;
    height: 0;
}

.icon {
    width: 16px;
    height: 16px;
}

.icon-s {
    width: 12px;
    height: 12px;
}

.icon-up {
    width: 12px;
    height: 16px;
}

.icon-x {
    width: 10px;
    height: 10px;
}

.icon-m {
    width: 20px;
    height: 20px;
}

.icon-l {
    width: 32px;
    height: 32px;
}

.caret {
    width: 7px;
    height: 4px;
    color: #555;
}

.tool {
    display: flex;
    align-items: center;
}

.icon + .caret {
    margin-left: 7px;
}

.off .caret {
    color: #aaa;
}

.sep {
    width: 1px;
    background: #b0b2b4;
}

/* title bar */
.titlebar {
    display: grid;
    grid-template-columns: 1fr auto 1fr;
    align-items: center;
    height: 32px;
    padding-bottom: 4px;
    background: #e3e3e3;
}

.quick-access {
    display: flex;
    align-items: center;
    gap: 8px;
    padding-left: 12px;
}

.quick-access .sep {
    height: 24px;
    margin: 0 -1px 0 3px;
}

.quick-access .tight {
    margin: 0 0 0 -5px;
}

.title {
    margin: 0;
    font-size: 13px;
    font-weight: normal;
    line-height: 20px;
}

.window-controls {
    display: flex;
    justify-content: flex-end;
    gap: 15px;
    padding-right: 11px;
}

/* ribbon tabs */
.tabs {
    display: flex;
    height: 26px;
    padding-top: 1px;
    background: #e3e3e3;
    box-shadow: inset 0 -1px #c5c8ca;
}

.tab {
    padding: 0 20px 4px;
    margin-right: 1px;
    background: #cdd1d4;
    font-size: 15px;
    line-height: 20px;
    color: #555;
}

.tab.file {
    padding: 0 25px 4px;
    margin: 0;
    background: #696969;
    color: #fff;
}

.tab.active {
    background: #f8f8f8;
    color: #111;
}

.help-tools {
    display: flex;
    align-items: center;
    gap: 8px;
    height: 16px;
    margin-left: auto;
    padding-right: 4px;
}

/* ribbon */
.ribbon {
    display: flex;
    border-bottom: 2px solid #a3a3a3;
}

.group {
    display: flex;
    flex-direction: column;
    border-right: 1px solid #c3c5c7;
}

.group.rest {
    flex: 1;
    border-right: none;
}

.group-body {
    display: flex;
    justify-content: center;
    gap: 8px;
    height: 87px;
    padding: 1px 7px 0;
    background: #f8f8f8;
}

.group-label {
    display: flex;
    justify-content: center;
    align-items: center;
    gap: 4px;
    height: 25px;
    padding: 0 5px;
    background: #eceef0;
}

.big {
    display: flex;
    flex-direction: column;
    align-items: center;
    min-width: 32px;
    padding-top: 5px;
}

.big .icon-l {
    margin-bottom: 10px;
}

.big .caret {
    margin-top: 6px;
}

.col {
    display: flex;
    flex-direction: column;
}

.cmd {
    display: flex;
    align-items: center;
    height: 28px;
}

.cmd .icon {
    margin-right: 4px;
}

.cmd .caret {
    margin-left: 7px;
}

.cmd.off {
    color: #aaa;
}

/* workspace */
.workspace {
    display: flex;
    flex: 1;
    min-height: 0;
}

.navigator {
    display: flex;
    flex-direction: column;
    flex: 0 0 455px;
    padding-bottom: 6px;
    border-right: 2px solid #a3a3a3;
    background: #eceef1;
}

.nav-tabs {
    display: flex;
    height: 28px;
    padding-top: 1px;
    background: #cfd0d2;
}

.nav-tab {
    display: flex;
    align-items: center;
    gap: 3px;
    padding: 0 8px;
    border: solid #a8acae;
    border-width: 1px 1px 1px 0;
    background: #d8dcdd;
    color: #777;
}

.nav-tab.active {
    gap: 5px;
    padding-left: 9px;
    border-width: 1px;
    border-color: #eceef1 #a8acae #eceef1 #eceef1;
    background: #eceef1;
    color: #333;
}

.nav-head {
    display: flex;
    align-items: center;
    gap: 10px;
    height: 28px;
    padding: 1px 10px 0 28px;
}

.nav-head h2 {
    margin: 0 auto 0 0;
    font-size: 12px;
    font-weight: 500;
}

.icon-m + .caret {
    margin-left: 7px;
}

.filter {
    display: flex;
    align-items: center;
    gap: 7px;
    padding: 0 13px 4px 12px;
}

.filter label {
    margin-right: -3px;
}

.filter .icon-s {
    margin-left: 4px;
}

.filter-box {
    display: flex;
    align-items: center;
    flex: 1;
    height: 30px;
    padding-right: 4px;
    border: 1px solid #c0c2c4;
    background: #fff;
}

.filter-box input {
    flex: 1;
    min-width: 0;
    height: 28px;
    outline: none;
}

.tree-box {
    display: flex;
    flex: 1;
    min-height: 0;
    margin: 0 6px 0 8px;
    border-top: 1px solid #c8cacc;
    background: #fdfdfd;
}

.tree {
    flex: 1;
    margin: 0;
    padding: 0 0 0 3px;
    list-style: none;
    overflow: hidden;
}

.row {
    display: flex;
    align-items: center;
    height: 24px;
    white-space: nowrap;
}

.row .icon {
    margin-right: 4px;
}

.row span {
    padding: 2px 0;
    border: 1px solid transparent;
}

.row.off {
    color: #bbb;
}

.row .selected {
    border: 1px dotted #222;
    background: #ade0ff;
}

.lv2 {
    padding-left: 20px;
}

.lv3 {
    padding-left: 40px;
}

.twist {
    width: 20px;
}

.twist::before {
    content: "";
    display: block;
    margin-left: 4px;
    border: 0 solid transparent;
}

.twist.open::before {
    width: 0;
    border-width: 8px 5px 0;
    border-top-color: #888;
}

.twist.closed::before {
    width: 0;
    border-width: 5px 0 5px 8px;
    border-left-color: #888;
}

.scrollbar {
    display: flex;
    flex-direction: column;
    width: 15px;
    background: #dfe0e2;
}

.scroll-btn {
    display: flex;
    align-items: center;
    justify-content: center;
    height: 15px;
    border: 1px solid #c8cacc;
    background: #f8f8f8;
}

.scroll-btn .caret {
    color: #888;
}

.flip {
    transform: rotate(180deg);
}

.track {
    flex: 1;
}

.thumb {
    height: 79%;
    border: 1px solid #b5b7b9;
    background: #fbfbfb;
}

/* graphics area */
.viewport {
    position: relative;
    flex: 1;
    min-width: 0;
    background: #e8eaee;
}

.scene {
    width: 100%;
    height: 100%;
}

.csys-name {
    font-size: 11px;
    fill: #764f56;
}

.axis-name {
    font-size: 11px;
    fill: #000;
}

.view-tools {
    position: absolute;
    left: 5px;
    top: 95px;
    display: flex;
    flex-direction: column;
    gap: 2px;
    padding: 2px 4px 3px;
    border: 1px solid #a0a0a0;
    background: #f8f8f8;
}

.view-tools button {
    position: relative;
    display: flex;
    align-items: center;
    justify-content: center;
    width: 23px;
    height: 24px;
}

.view-tools .has-menu {
    height: 25px;
}

.pressed {
    border: 1px solid #a8aaac !important;
    background: #dcdee0 !important;
}

.has-menu::after {
    content: "";
    position: absolute;
    right: 2px;
    bottom: 1px;
    border: solid transparent;
    border-width: 0 0 4px 4px;
    border-bottom-color: #555;
}

/* status bar */
.statusbar {
    display: flex;
    align-items: center;
    height: 35px;
    padding: 2px 19px 0 6px;
    border-top: 2px solid #929694;
    background: #eceef0;
}

.statusbar .sep {
    height: 27px;
}

.status-btn {
    display: flex;
    align-items: center;
    justify-content: center;
    width: 22px;
    height: 22px;
    margin-right: 4px;
}

.message {
    flex: 1;
    margin: 0 0 0 6px;
    padding-bottom: 4px;
    font-size: 11px;
    white-space: nowrap;
    overflow: hidden;
}

.message::before {
    content: "";
    display: inline-block;
    width: 5px;
    height: 5px;
    margin-right: 5px;
    border-radius: 50%;
    background: #14628a;
    vertical-align: 2px;
}

.status-btn + .sep {
    margin-left: 5px;
}

.status-gap {
    width: 40px;
}

.find {
    display: flex;
    align-items: center;
    height: 24px;
    margin: 0 1px 0 2px;
    padding-left: 5px;
    border: 1px solid #c0c2c4;
    background: #fafafa;
}

.drop {
    display: flex;
    align-items: center;
    justify-content: center;
    width: 15px;
    height: 22px;
    border-left: 1px solid #c0c2c4;
}

.find .drop {
    margin-left: 4px;
}

.count {
    width: 98px;
    padding: 0 0 2px 4px;
}

.select-wrap {
    position: relative;
    width: 176px;
}

.select-wrap select {
    appearance: none;
    display: block;
    width: 100%;
    height: 24px;
    padding-left: 7px;
    border: 1px solid #a8aaac;
    background: #fafafa;
}

.select-wrap .drop {
    position: absolute;
    right: 1px;
    top: 1px;
    pointer-events: none;
}

/* forum mark over the lower right corner */
.watermark {
    position: absolute;
    right: 4px;
    bottom: 4px;
    display: flex;
    height: 63px;
    background: rgba(248, 250, 250, 0.35);
    pointer-events: none;
}

.rings {
    width: 60px;
    height: 60px;
    margin-top: 2px;
}

.mark-text {
    display: flex;
    flex-direction: column;
    width: 147px;
    white-space: nowrap;
}

.mark-text strong {
    padding-left: 8px;
    font-size: 30px;
    line-height: 40px;
    color: #8fcfae;
}

.mark-text span {
    margin-left: -2px;
    font-size: 15px;
    line-height: 18px;
    color: #c5e4e2;
}
```
